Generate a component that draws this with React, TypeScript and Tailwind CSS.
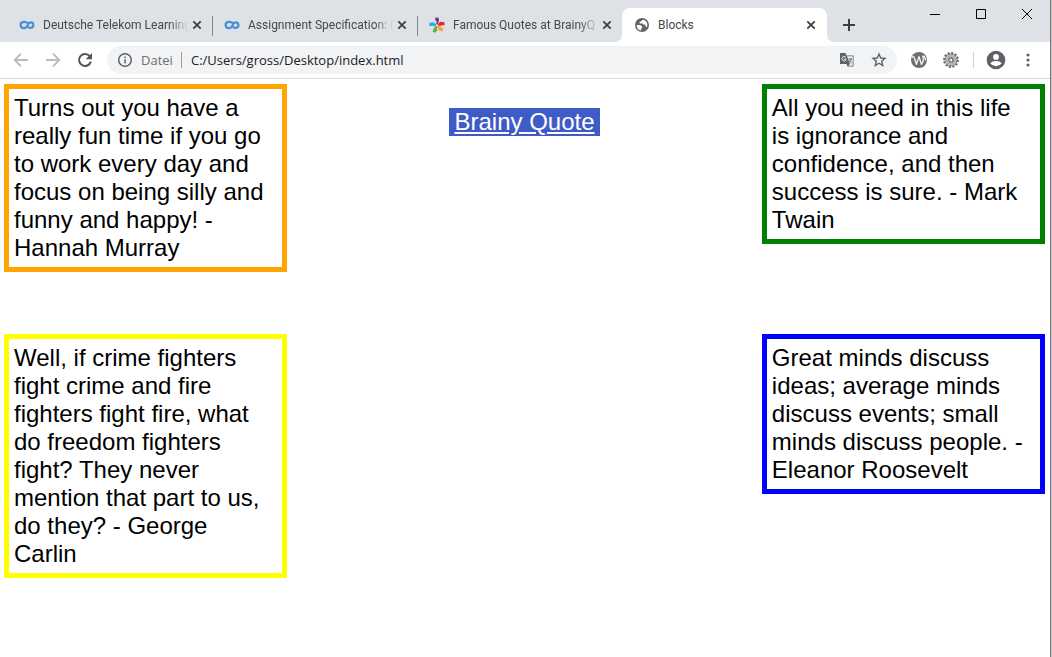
import type { ReactNode } from "react";

function InfinityIcon() {
  return (
    <svg className="size-4 shrink-0" viewBox="0 0 16 16" fill="none" stroke="#4a90d2" strokeWidth="2.2" aria-hidden="true">
      <path d="M8.900 6.300C7.700 5 6.400 4.900 5.300 4.900C3.300 4.900 1.600 6.100 1.600 8C1.600 9.900 3.200 11.100 5.100 11.100C7 11.100 7.800 9.800 8.600 8.200C9.300 6.500 10 5.300 11.600 5.300C13.200 5.300 14.400 6.400 14.400 8C14.400 9.700 13.200 10.900 11.500 10.900C10.300 10.900 9.500 10.300 8.900 9.700" />
    </svg>
  );
}

function PinwheelIcon() {
  return (
    <svg className="size-4 shrink-0" viewBox="0 0 16 16" aria-hidden="true">
      <path d="M6.400 0.600L9.600 0.800L10 3.500L8.600 7.600L7.300 7L7.600 4L6.200 3.200Z" fill="#7b2d8e" />
      <path d="M8.500 7.400L11.200 4.800L15.400 5.300L15.600 8.300L12.500 8.200L11 9.200Z" fill="#e3253a" />
      <path d="M8.200 8.800L9.600 8L11.500 10.200L14.400 11.200L13 14.800L10 13Z" fill="#f8a51b" />
      <path d="M7.200 8.600L8.600 10L7.800 12L8.500 13.500L6 15.800L3.600 14.400L4.800 11Z" fill="#62b146" />
      <path d="M7.300 7.400L6.400 9.200L3.600 8.800L0.300 9.200L0.400 5.800L4.500 5.600Z" fill="#1cade4" />
    </svg>
  );
}

function GlobeIcon() {
  return (
    <svg className="size-4 shrink-0" viewBox="0 0 16 16" aria-hidden="true">
      <circle cx="8" cy="8" r="7" fill="#5f6368" />
      <path d="M2.700 8.100H6.300L8.100 9.600V11L7 11.500L7.300 13.600C4.500 13.500 2.600 11.100 2.700 8.100Z" fill="#fff" />
      <path d="M8.600 2.700L7.400 4.300L5.600 4.800V6.400H8.400L9.200 7.500H11L11.500 9.200L13 10C14.300 6.300 12.200 3 8.600 2.700Z" fill="#fff" />
    </svg>
  );
}

function CloseButton({ title }: { title: string }) {
  return (
    <button type="button" aria-label={`Close ${title}`} className="flex size-4 shrink-0 items-center justify-center">
      <svg className="size-4" viewBox="0 0 16 16" fill="none" stroke="#3c4043" strokeWidth="1.8" aria-hidden="true">
        <path d="M4.300 4.300L11.700 11.700M11.700 4.300L4.300 11.700" />
      </svg>
    </button>
  );
}

function Tab({ title, icon, separator = false }: { title: string; icon: ReactNode; separator?: boolean }) {
  return (
    <div className="relative flex h-full w-[205px] items-center pl-3 pr-[7px]">
      {icon}
      <span className="ml-2 min-w-0 flex-1 overflow-hidden whitespace-nowrap text-[#45494d] [mask-image:linear-gradient(to_right,black_calc(100%_-_20px),transparent)]">
        {title}
      </span>
      <CloseButton title={title} />
      {separator && <span className="absolute -right-px top-2 h-5 w-px bg-[#80868b]" />}
    </div>
  );
}

function ActiveTab() {
  return (
    <div className="relative flex h-full w-[205px] items-center rounded-t-lg bg-white pl-3 pr-2 text-[#45494d]">
      <svg className="absolute -left-2 bottom-0 size-2" viewBox="0 0 8 8" aria-hidden="true">
        <path d="M8 0V8H0Q8 8 8 0Z" fill="#fff" />
      </svg>
      <svg className="absolute -right-2 bottom-0 size-2" viewBox="0 0 8 8" aria-hidden="true">
        <path d="M0 0V8H8Q0 8 0 0Z" fill="#fff" />
      </svg>
      <GlobeIcon />
      <span className="ml-2 flex-1">Blocks</span>
      <CloseButton title="Blocks" />
    </div>
  );
}

function TabStrip() {
  return (
    <header className="flex h-[42px] items-start bg-[#dee1e6]">
      <nav aria-label="Tabs" className="flex h-[42px] pl-[7px] pt-2 font-[Roboto,'Noto_Sans',sans-serif] text-[12px] leading-4">
        <Tab title="Deutsche Telekom Learning" icon={<InfinityIcon />} separator />
        <Tab title="Assignment Specification: (" icon={<InfinityIcon />} separator />
        <Tab title="Famous Quotes at BrainyQ" icon={<PinwheelIcon />} />
        <ActiveTab />
        <button type="button" aria-label="New tab" className="ml-3 flex w-5 items-center justify-center">
          <svg className="size-5" viewBox="0 0 20 20" stroke="#3c4043" strokeWidth="2" aria-hidden="true">
            <path d="M10 4V16M4 10H16" />
          </svg>
        </button>
      </nav>
      <div className="ml-auto flex text-black">
        <button type="button" aria-label="Minimize" className="flex h-7 w-[46px] items-center justify-center">
          <svg className="size-[10px]" viewBox="0 0 10 10" stroke="currentColor" aria-hidden="true">
            <path d="M0 5.500H10" />
          </svg>
        </button>
        <button type="button" aria-label="Maximize" className="flex h-7 w-[46px] items-center justify-center">
          <svg className="size-[10px]" viewBox="0 0 10 10" fill="none" stroke="currentColor" aria-hidden="true">
            <path d="M0.500 0.500H9.500V9.500H0.500Z" />
          </svg>
        </button>
        <button type="button" aria-label="Close window" className="flex h-7 w-[46px] items-center justify-center">
          <svg className="size-[10px]" viewBox="0 0 10 10" stroke="currentColor" aria-hidden="true">
            <path d="M0 0L10 10M10 0L0 10" />
          </svg>
        </button>
      </div>
    </header>
  );
}

function TranslateIcon() {
  return (
    <svg className="size-4" viewBox="0 0 16 16" aria-hidden="true">
      <path d="M1 1H6.500L7.500 3.500H14.500V14.500H8.500L7.500 12H1Z" fill="#5f6368" />
      <path d="M8 4.300H13.700V13.700H9.300L11 12Z" fill="#f1f3f4" />
      <path d="M6.800 5.200A2.200 2.200 0 1 0 6.900 8V7H5" fill="none" stroke="#f1f3f4" strokeWidth="1" />
      <path d="M9.500 7H13M11.200 6V7M12.500 7.200Q11.800 9.500 10.200 10.500M10.200 8.300Q11 10 12.800 11" fill="none" stroke="#5f6368" strokeWidth="0.900" />
    </svg>
  );
}

function StarIcon() {
  return (
    <svg className="size-4" viewBox="0 0 16 16" fill="none" stroke="#5f6368" strokeWidth="1.400" aria-hidden="true">
      <path d="M8 2L9.700 6L14 6.400L10.700 9.200L11.700 13.500L8 11.200L4.300 13.500L5.300 9.200L2 6.400L6.300 6Z" />
    </svg>
  );
}

function WappIcon() {
  return (
    <svg className="size-4" viewBox="0 0 16 16" aria-hidden="true">
      <circle cx="8" cy="8" r="8" fill="#6e6e6e" />
      <path d="M0.800 5.500Q2.600 3.600 3.400 6L5.400 12.300L8 4.600L10.400 12.300Q13.400 8.500 11.800 4.200Q14.200 3.800 14.600 8.500" fill="none" stroke="#f8f8f8" strokeWidth="1.300" strokeLinejoin="round" />
    </svg>
  );
}

function GearIcon() {
  return (
    <svg className="size-4" viewBox="0 0 16 16" aria-hidden="true">
      <circle cx="8" cy="8" r="6.900" fill="none" stroke="#626262" strokeWidth="2" strokeDasharray="2.100 1.510" />
      <circle cx="8" cy="8" r="6" fill="#c4c4c4" stroke="#757575" strokeWidth="0.800" />
      <circle cx="8" cy="8" r="4.200" fill="none" stroke="#a2a2a2" strokeWidth="1" />
      <circle cx="8" cy="8" r="2.100" fill="#eee" stroke="#656565" strokeWidth="1.200" />
    </svg>
  );
}

function Toolbar() {
  return (
    <div className="flex h-[37px] items-center border-b border-[#d5d7da] bg-white pl-[13px] pr-[14px]">
      <div className="flex gap-4">
        <button type="button" aria-label="Back">
          <svg className="size-4" viewBox="0 0 16 16" fill="none" stroke="#babcbe" strokeWidth="1.900" aria-hidden="true">
            <path d="M15 8H2.500M8 1.700L1.700 8L8 14.300" />
          </svg>
        </button>
        <button type="button" aria-label="Forward">
          <svg className="size-4" viewBox="0 0 16 16" fill="none" stroke="#babcbe" strokeWidth="1.900" aria-hidden="true">
            <path d="M1 8H13.500M8 1.700L14.300 8L8 14.300" />
          </svg>
        </button>
        <button type="button" aria-label="Reload">
          <svg className="size-4" viewBox="0 0 16 16" aria-hidden="true">
            <path d="M12.800 4.300A6 6 0 1 0 13.800 9.600" fill="none" stroke="#53575b" strokeWidth="2" />
            <path d="M15 1V7.300H8.700Z" fill="#53575b" />
          </svg>
        </button>
      </div>
      <div className="ml-[14px] flex h-7 min-w-0 flex-1 items-center rounded-full bg-[#f1f3f4] px-[10px] text-[13px] leading-5">
        <svg className="size-4 shrink-0" viewBox="0 0 16 16" fill="none" stroke="#5f6368" strokeWidth="1.500" aria-hidden="true">
          <circle cx="8" cy="8" r="6.300" />
          <path d="M8 7.200V11.500M8 4.500V6" />
        </svg>
        <span className="ml-2 w-8 text-[#6b6f74]">Datei</span>
        <span className="ml-2 h-4 w-px bg-[#9aa0a6]" />
        <input
          aria-label="Address"
          defaultValue="C:/Users/gross/Desktop/index.html"
          className="ml-[9px] min-w-0 flex-1 bg-transparent text-[#202124] outline-none"
        />
        <div className="flex gap-4">
          <button type="button" aria-label="Translate page"><TranslateIcon /></button>
          <button type="button" aria-label="Bookmark page"><StarIcon /></button>
        </div>
      </div>
      <div className="ml-[14px] flex items-center">
        <button type="button" aria-label="Wapp extension"><WappIcon /></button>
        <button type="button" aria-label="Gear extension" className="ml-4"><GearIcon /></button>
        <span className="ml-[14px] h-4 w-px bg-[#cfd1d4]" />
        <button type="button" aria-label="Profile" className="ml-3">
          <svg className="size-5" viewBox="0 0 20 20" aria-hidden="true">
            <circle cx="10" cy="10" r="9.300" fill="#5f6368" />
            <circle cx="10" cy="6.900" r="2.900" fill="#fff" />
            <path d="M4.300 13.300Q6 10.900 10 10.900Q14 10.900 15.700 13.300Q13.600 16.200 10 16.200Q6.400 16.200 4.300 13.300Z" fill="#fff" />
          </svg>
        </button>
        <button type="button" aria-label="Menu" className="ml-[14px]">
          <svg className="size-4" viewBox="0 0 16 16" fill="#5f6368" aria-hidden="true">
            <circle cx="8" cy="3" r="1.600" />
            <circle cx="8" cy="8" r="1.600" />
            <circle cx="8" cy="13" r="1.600" />
          </svg>
        </button>
      </div>
    </div>
  );
}

function Quote({ border, children }: { border: string; children: ReactNode }) {
  return <blockquote className={`self-start border-5 py-[5px] pl-[5px] pr-2 ${border}`}>{children}</blockquote>;
}

export default function App() {
  return (
    <div className="flex min-h-screen bg-[#c4c4c4] pr-px">
      <div className="flex min-w-0 flex-1 flex-col border-r border-[#777] bg-white font-['Open_Sans','Noto_Sans',sans-serif]">
        <TabStrip />
        <Toolbar />
        <main className="grid grid-cols-[27.2%_1fr_27.2%] gap-y-[62px] pl-1 pr-[5px] pt-[5px] font-['Liberation_Sans',Arial,sans-serif] text-[24px] leading-7 text-black">
          <Quote border="border-[#ffa500]">
            Turns out you have a really fun time if you go to work every day and focus on being silly and funny and happy! - Hannah Murray
          </Quote>
          <div className="pt-6 text-center">
            <a href="https://www.brainyquote.com" className="inline-block bg-[#3f5bc7] px-[5px] text-white underline">
              Brainy Quote
            </a>
          </div>
          <Quote border="border-[#008000]">
            All you need in this life is ignorance and confidence, and then success is sure. - Mark Twain
          </Quote>
          <Quote border="border-[#ffff00]">
            Well, if crime fighters fight crime and fire fighters fight fire, what do freedom fighters fight? They never mention that part to us, do they? - George Carlin
          </Quote>
          <div />
          <Quote border="border-[#0000ff]">
            Great minds discuss ideas; average minds discuss events; small minds discuss people. - Eleanor Roosevelt
          </Quote>
        </main>
      </div>
    </div>
  );
}
